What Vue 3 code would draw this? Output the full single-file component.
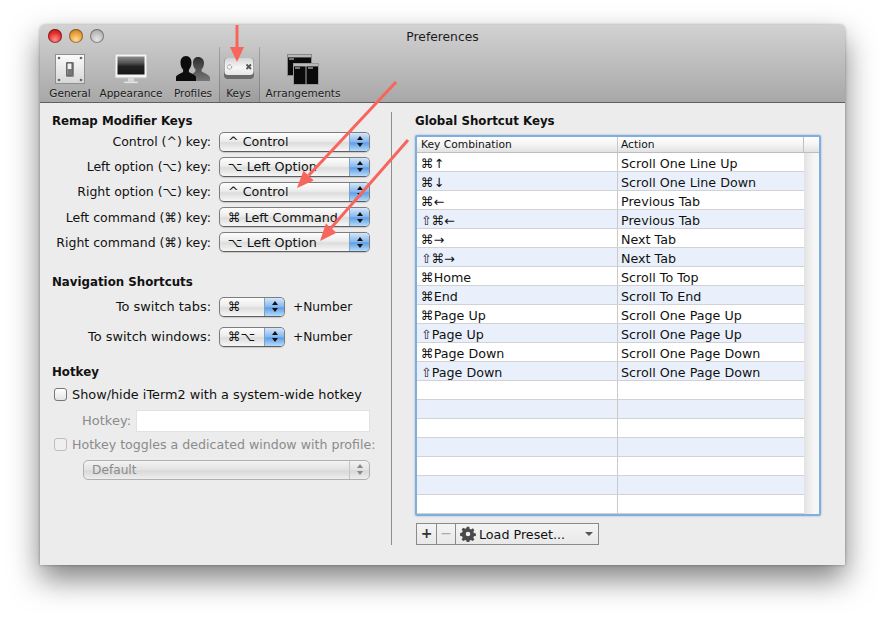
<script setup>
const toolbar = [
  { id: 'general', label: 'General', w: 50 },
  { id: 'appearance', label: 'Appearance', w: 72 },
  { id: 'profiles', label: 'Profiles', w: 52 },
  { id: 'keys', label: 'Keys', w: 41, selected: true },
  { id: 'arrangements', label: 'Arrangements', w: 86 },
]
const remap = [
  ['Control (^) key:', '^ Control'],
  ['Left option (⌥) key:', '⌥ Left Option'],
  ['Right option (⌥) key:', '^ Control'],
  ['Left command (⌘) key:', '⌘ Left Command'],
  ['Right command (⌘) key:', '⌥ Left Option'],
]
const nav = [
  ['To switch tabs:', '⌘'],
  ['To switch windows:', '⌘⌥'],
]
const rows = [
  ['⌘↑', 'Scroll One Line Up'],
  ['⌘↓', 'Scroll One Line Down'],
  ['⌘←', 'Previous Tab'],
  ['⇧⌘←', 'Previous Tab'],
  ['⌘→', 'Next Tab'],
  ['⇧⌘→', 'Next Tab'],
  ['⌘Home', 'Scroll To Top'],
  ['⌘End', 'Scroll To End'],
  ['⌘Page Up', 'Scroll One Page Up'],
  ['⇧Page Up', 'Scroll One Page Up'],
  ['⌘Page Down', 'Scroll One Page Down'],
  ['⇧Page Down', 'Scroll One Page Down'],
  ['', ''], ['', ''], ['', ''], ['', ''], ['', ''], ['', ''], ['', ''],
]
</script>

<template>
  <div class="page">
    <div class="window">
      <header class="chrome">
        <div class="titlebar">
          <div class="lights">
            <span class="light red"></span>
            <span class="light orange"></span>
            <span class="light grey"></span>
          </div>
          <div class="title">Preferences</div>
        </div>
        <nav class="toolbar">
          <div
            v-for="t in toolbar"
            :key="t.id"
            class="tool"
            :class="{ selected: t.selected }"
            :style="{ width: t.w + 'px' }"
          >
            <svg v-if="t.id === 'general'" class="icon" width="32" height="32" viewBox="0 0 32 32">
              <defs>
                <linearGradient id="plate" x1="0" y1="0" x2="0" y2="1">
                  <stop offset="0" stop-color="#fbfbfb" /><stop offset="1" stop-color="#d6d6d6" />
                </linearGradient>
              </defs>
              <rect x="1.5" y="1.5" width="29" height="29" fill="url(#plate)" stroke="#8f8f8f" />
              <circle cx="5" cy="5" r="1.3" fill="#666" /><circle cx="27" cy="5" r="1.3" fill="#666" />
              <circle cx="5" cy="27" r="1.3" fill="#666" /><circle cx="27" cy="27" r="1.3" fill="#666" />
              <rect x="12" y="9" width="8" height="15" rx="1" fill="#8a8a8a" />
              <rect x="13" y="10" width="5" height="12" fill="#f2f2f2" stroke="#333" stroke-width=".8" />
              <rect x="13.5" y="16" width="4.5" height="6" fill="#777" />
            </svg>
            <svg v-else-if="t.id === 'appearance'" class="icon" width="34" height="32" viewBox="0 0 34 32">
              <defs>
                <linearGradient id="screen" x1="0" y1="0" x2="0" y2="1">
                  <stop offset="0" stop-color="#8a8a8a" /><stop offset=".35" stop-color="#555" /><stop offset=".55" stop-color="#222" /><stop offset="1" stop-color="#151515" />
                </linearGradient>
              </defs>
              <rect x="1" y="1" width="32" height="24" fill="#f4f4f4" stroke="#bbb" />
              <rect x="3.5" y="3.5" width="27" height="18" fill="url(#screen)" />
              <rect x="14" y="25" width="6" height="4" fill="#d8d8d8" />
              <rect x="10" y="28.5" width="14" height="1.6" rx=".8" fill="#eee" stroke="#c4c4c4" stroke-width=".5" />
            </svg>
            <svg v-else-if="t.id === 'profiles'" class="icon" width="34" height="32" viewBox="0 0 34 32">
              <defs>
                <linearGradient id="back" x1="0" y1="0" x2="0" y2="1">
                  <stop offset="0" stop-color="#2c2c2c" /><stop offset="1" stop-color="#777" />
                </linearGradient>
              </defs>
              <path d="M22 4c-3.4 0-5 2.6-5 6 0 2.7 1 5 2.4 6.3v2.3L15 22v6h19v-3.5c0-2-5.800-4.200-8.400-5.900v-2.300C27 15 28 12.700 28 10c0-3.400-2.400-6-6-6z" fill="url(#back)" />
              <path d="M10 3C6.300 3 4.500 6 4.500 9.500c0 3 1 5.500 2.600 7v2.600C4 20.800 0 22.300 0 24.500V28h20v-3.500c0-2.200-4-3.700-7.100-5.400v-2.600c1.600-1.500 2.600-4 2.600-7C15.500 6 13.700 3 10 3z" fill="#0c0c0c" />
            </svg>
            <svg v-else-if="t.id === 'keys'" class="icon" width="32" height="32" viewBox="0 0 32 32">
              <defs>
                <linearGradient id="keycap" x1="0" y1="0" x2="0" y2="1">
                  <stop offset="0" stop-color="#d4d4d4" /><stop offset=".55" stop-color="#f6f6f6" /><stop offset="1" stop-color="#e6e6e6" />
                </linearGradient>
              </defs>
              <rect x="1" y="5" width="30" height="21" rx="4" fill="#6a6a6a" />
              <rect x="1.500" y="5" width="29" height="17" rx="3.500" fill="url(#keycap)" />
              <circle cx="6.500" cy="14" r="2.200" fill="none" stroke="#888" stroke-width="1" stroke-dasharray="1.500 .8" />
              <path d="M23.500 11.500l4.500 4.500m0-4.500l-4.500 4.500" stroke="#555" stroke-width="1.800" />
            </svg>
            <svg v-else class="icon" width="34" height="32" viewBox="0 0 34 32">
              <rect x="1.500" y="1.500" width="24" height="21" fill="#0a0a0a" stroke="#888" />
              <rect x="2" y="2" width="23" height="2.400" fill="#b8b8b8" />
              <rect x="3" y="5.500" width="5" height="1" fill="#ddd" />
              <rect x="7.500" y="10.500" width="25" height="21" fill="#0a0a0a" stroke="#999" />
              <rect x="8" y="11" width="24" height="2.400" fill="#b8b8b8" />
              <rect x="19.500" y="13" width="1" height="18" fill="#aaa" />
              <rect x="9" y="14.500" width="5" height="1" fill="#ddd" />
              <rect x="22" y="14.500" width="5" height="1" fill="#ddd" />
            </svg>
            <span class="tool-label">{{ t.label }}</span>
          </div>
        </nav>
      </header>

      <main class="content">
        <section class="left">
          <h2 class="heading">Remap Modifier Keys</h2>
          <div class="form remap">
            <template v-for="(r, i) in remap" :key="i">
              <label class="lbl">{{ r[0] }}</label>
              <div class="popup wide">
                <span class="popup-text">{{ r[1] }}</span>
                <span class="stepper"><i class="up"></i><i class="down"></i></span>
              </div>
            </template>
          </div>

          <h2 class="heading nav-head">Navigation Shortcuts</h2>
          <div class="form nav">
            <template v-for="(r, i) in nav" :key="i">
              <label class="lbl">{{ r[0] }}</label>
              <div class="nav-control">
                <div class="popup small">
                  <span class="popup-text">{{ r[1] }}</span>
                  <span class="stepper"><i class="up"></i><i class="down"></i></span>
                </div>
                <span class="plus">+Number</span>
              </div>
            </template>
          </div>

          <h2 class="heading hot-head">Hotkey</h2>
          <div class="check-row first">
            <span class="check"></span>
            <span>Show/hide iTerm2 with a system-wide hotkey</span>
          </div>
          <div class="hotkey-row">
            <span class="dim hot-label">Hotkey:</span>
            <span class="hot-input"></span>
          </div>
          <div class="check-row second dim">
            <span class="check disabled"></span>
            <span>Hotkey toggles a dedicated window with profile:</span>
          </div>
          <div class="popup disabled-popup">
            <span class="popup-text">Default</span>
            <span class="stepper flat"><i class="up"></i><i class="down"></i></span>
          </div>
        </section>

        <div class="divider"></div>

        <section class="right">
          <h2 class="heading">Global Shortcut Keys</h2>
          <div class="table">
            <div class="thead">
              <span class="c1">Key Combination</span>
              <span class="c2">Action</span>
              <span class="c3"></span>
            </div>
            <div class="tbody">
              <div v-for="(r, i) in rows" :key="i" class="tr" :class="{ alt: i % 2 === 1 }">
                <span class="c1">{{ r[0] }}</span>
                <span class="c2">{{ r[1] }}</span>
                <span class="c3"></span>
              </div>
            </div>
          </div>
          <div class="buttons">
            <span class="btn square">+</span>
            <span class="btn square minus">−</span>
            <span class="btn preset">
              <svg width="16" height="16" viewBox="0 0 16 16">
                <path fill="#4a4a4a" fill-rule="evenodd" d="M6.800 .8h2.400l.4 2 1.400.6 1.700-1.100 1.700 1.700-1.100 1.700.6 1.400 2 .4v2.400l-2 .4-.6 1.400 1.100 1.700-1.700 1.700-1.700-1.100-1.400.6-.4 2H6.800l-.4-2-1.400-.6-1.700 1.100-1.700-1.700 1.100-1.700-.6-1.400-2-.4V6.900l2-.4.6-1.400-1.100-1.700 1.700-1.700 1.700 1.100 1.400-.6zM8 5.700a2.300 2.300 0 1 0 0 4.600 2.300 2.300 0 0 0 0-4.600z" />
              </svg>
              <span class="preset-text">Load Preset...</span>
              <i class="caret"></i>
            </span>
          </div>
        </section>
      </main>

      <svg class="arrows" width="805" height="540" viewBox="0 0 805 540">
        <g stroke="#f8655c" stroke-width="3" fill="#f8655c">
          <line x1="197" y1="0" x2="197" y2="23" />
          <polygon stroke="none" points="190,22 204,22 197,37" />
          <line x1="356" y1="57" x2="268.600" y2="150.600" />
          <polygon stroke="none" points="257,163 273.700,155.400 263.500,145.800" />
          <line x1="368" y1="115" x2="291" y2="203" />
          <polygon stroke="none" points="280,216 296.500,207.800 285.900,198.600" />
        </g>
      </svg>
    </div>
  </div>
</template>

<style>
html, body { margin: 0; background: #fff; }
</style>

<style scoped>
.page {
  width: 885px;
  height: 620px;
  padding: 25px 40px 55px;
  box-sizing: border-box;
  overflow: hidden;
  background: #fff;
  font-family: "DejaVu Sans", sans-serif;
  font-size: 12.7px;
  color: #111;
}
.window {
  position: relative;
  width: 805px;
  height: 540px;
  border-radius: 5px 5px 0 0;
  background: #ececec;
  box-shadow: 0 14px 30px rgba(0, 0, 0, .5), 0 0 3px rgba(0, 0, 0, .35);
  display: flex;
  flex-direction: column;
}
.chrome {
  height: 78px;
  box-sizing: border-box;
  border-radius: 5px 5px 0 0;
  border-bottom: 1px solid #5f5f5f;
  background: linear-gradient(#d2d2d2, #a8a8a8);
}
.titlebar {
  position: relative;
  height: 22px;
  display: flex;
  align-items: center;
  justify-content: center;
}
.lights {
  position: absolute;
  left: 8px;
  top: 4px;
  display: flex;
  gap: 7px;
}
.light {
  width: 14px;
  height: 14px;
  border-radius: 50%;
  box-shadow: inset 0 0 0 1px rgba(0, 0, 0, .35);
}
.red { background: radial-gradient(circle at 50% 75%, #ff8f8a, #e22a2a 55%, #a51818); }
.orange { background: radial-gradient(circle at 50% 75%, #ffdc9a, #e99a37 55%, #b56f1e); }
.grey { background: radial-gradient(circle at 50% 75%, #e6e6e6, #b8b8b8 60%, #9a9a9a); }
.title {
  font-size: 12.3px;
  color: #1c1c1c;
  padding-top: 1px;
}
.toolbar {
  display: flex;
  height: 55px;
  padding-left: 5px;
}
.tool {
  display: flex;
  flex-direction: column;
  align-items: center;
  justify-content: flex-start;
  padding-top: 6px;
  box-sizing: border-box;
  height: 55px;
  position: relative;
}
.tool.selected {
  padding-right: 2px;
  background: linear-gradient(rgba(0, 0, 0, 0), rgba(0, 0, 0, .07));
  box-shadow: inset 1px 0 0 rgba(0, 0, 0, .18), inset -1px 0 0 rgba(0, 0, 0, .18);
}
.icon { display: block; height: 32px; flex: none; }
.tool-label {
  font-size: 10.5px;
  line-height: 14px;
  margin-top: 1px;
  color: #1b1b1b;
  white-space: nowrap;
  text-shadow: 0 1px 0 rgba(255, 255, 255, .3);
}
.content {
  flex: 1;
  display: flex;
  min-height: 0;
}
.left {
  width: 351px;
  box-sizing: border-box;
  padding: 10px 0 0 12px;
  flex: none;
}
.divider {
  width: 1px;
  height: 433px;
  margin-top: 9px;
  background: #8e8e8e;
  flex: none;
}
.right {
  flex: 1;
  padding: 10px 0 0 23px;
  min-width: 0;
}
.heading {
  margin: 0;
  font-size: 11.8px;
  line-height: 16px;
  font-weight: 700;
  color: #111;
}
.form {
  display: grid;
  grid-template-columns: 159px auto;
  column-gap: 8px;
  align-items: center;
  justify-content: start;
}
.remap { grid-auto-rows: 25.2px; margin-top: 0; }
.lbl {
  text-align: right;
  white-space: nowrap;
  direction: rtl;
  unicode-bidi: plaintext;
}
.remap .lbl { font-size: 12.5px; }
.nav .lbl { font-size: 12.9px; }
.popup {
  position: relative;
  height: 20px;
  box-sizing: border-box;
  border: 1px solid #7d7d7d;
  border-bottom-color: #5e5e5e;
  border-radius: 5px;
  background: linear-gradient(#fdfdfd, #ececec 45%, #dcdcdc 55%, #f7f7f7);
  display: flex;
  align-items: center;
  box-shadow: 0 1px 1px rgba(0, 0, 0, .15);
}
.wide { width: 151px; }
.small { width: 66px; }
.popup-text {
  padding-left: 8px;
  white-space: nowrap;
  flex: 1;
}
.stepper {
  width: 20px;
  height: 100%;
  flex: none;
  border-radius: 0 4px 4px 0;
  background: linear-gradient(#d5e6f8, #86b8ee 48%, #5f9ee6 55%, #b5dcfb);
  border-left: 1px solid #80a0c4;
  box-sizing: border-box;
  display: flex;
  flex-direction: column;
  align-items: center;
  justify-content: center;
  gap: 3px;
}
.stepper i {
  width: 0;
  height: 0;
  border-left: 3px solid transparent;
  border-right: 3px solid transparent;
}
.stepper .up { border-bottom: 4px solid #111; }
.stepper .down { border-top: 4px solid #111; }
.nav-head { margin-top: 19px; }
.nav { grid-auto-rows: 30px; margin-top: 2px; }
.nav-control { display: flex; align-items: center; gap: 8px; }
.plus { white-space: nowrap; font-size: 12.2px; }
.hot-head { margin-top: 12px; }
.check-row {
  display: flex;
  align-items: center;
  gap: 5px;
  height: 16px;
  margin-top: 7px;
  padding-left: 2px;
  white-space: nowrap;
}
.check-row.first { font-size: 12.85px; }
.check-row.second { margin-top: 5px; font-size: 12.6px; }
.check {
  width: 13px;
  height: 13px;
  box-sizing: border-box;
  border: 1px solid #777;
  border-radius: 3px;
  background: linear-gradient(#fff, #e2e2e2);
  flex: none;
}
.check.disabled { border-color: #bdbdbd; background: #efefef; }
.dim { color: #8b8b8b; }
.hotkey-row {
  display: flex;
  align-items: center;
  gap: 6px;
  margin-top: 7px;
  padding-left: 30px;
  height: 22px;
}
.hot-label { width: 48px; flex: none; font-size: 13px; white-space: nowrap; }
.hot-input {
  width: 234px;
  height: 22px;
  background: #fff;
  border: 1px solid #e2e2e2;
  box-sizing: border-box;
}
.disabled-popup {
  width: 287px;
  margin: 7px 0 0 31px;
  border-color: #b0b0b0;
  color: #8b8b8b;
  box-shadow: none;
  background: linear-gradient(#f3f3f3, #e2e2e2 50%, #d8d8d8 55%, #eeeeee);
  font-size: 12.2px;
}
.stepper.flat {
  background: none;
  border-left: 1px solid #c4c4c4;
}
.stepper.flat .up { border-bottom-color: #888; }
.stepper.flat .down { border-top-color: #888; }
.table {
  width: 406px;
  height: 381px;
  margin-top: 6px;
  box-sizing: border-box;
  border: 2px solid #7fb0dd;
  border-radius: 2px;
  background: linear-gradient(90deg, #fff 387px, #e2e2e2 387px, #f6f6f6 397px);
  box-shadow: 0 0 2px rgba(70, 130, 190, .6);
  overflow: hidden;
}
.thead, .tr {
  display: flex;
  box-sizing: border-box;
}
.thead {
  height: 16px;
  font-size: 10.7px;
  line-height: 15px;
  background: linear-gradient(#ffffff, #f4f4f4 50%, #e2e2e2);
  border-bottom: 1px solid #bdbdbd;
}
.tr {
  height: 19px;
  line-height: 21px;
  background: #fff;
  border-bottom: 1px solid #d2d2d2;
  width: 387px;
}
.tr.alt { background: #e9f0fb; }
.c1 {
  width: 201px;
  box-sizing: border-box;
  padding-left: 4px;
  border-right: 1px solid #c9c9c9;
  flex: none;
  white-space: nowrap;
}
.c2 {
  width: 186px;
  box-sizing: border-box;
  padding-left: 3px;
  flex: none;
  white-space: nowrap;
}
.thead .c2 { border-right: 1px solid #c0c0c0; }
.thead .c3 { flex: 1; }
.tr .c3 { display: none; }
.buttons {
  display: flex;
  margin-top: 7px;
  margin-left: 1px;
  height: 22px;
}
.btn {
  height: 22px;
  box-sizing: border-box;
  border: 1px solid #8a8a8a;
  background: linear-gradient(#f4f4f4, #e8e8e8);
  display: flex;
  align-items: center;
  justify-content: center;
  margin-left: -1px;
}
.btn:first-child { margin-left: 0; }
.square { width: 21px; font-size: 14px; font-weight: 700; color: #333; padding-bottom: 3px; }
.minus { width: 20px; color: #aaa; font-weight: 400; }
.preset {
  width: 144px;
  justify-content: flex-start;
  padding-left: 4px;
  gap: 3px;
}
.preset-text { flex: 1; white-space: nowrap; }
.caret {
  width: 0;
  height: 0;
  margin-right: 5px;
  border-left: 4px solid transparent;
  border-right: 4px solid transparent;
  border-top: 4px solid #555;
}
.arrows {
  position: absolute;
  left: 0;
  top: 0;
  pointer-events: none;
}
</style>
